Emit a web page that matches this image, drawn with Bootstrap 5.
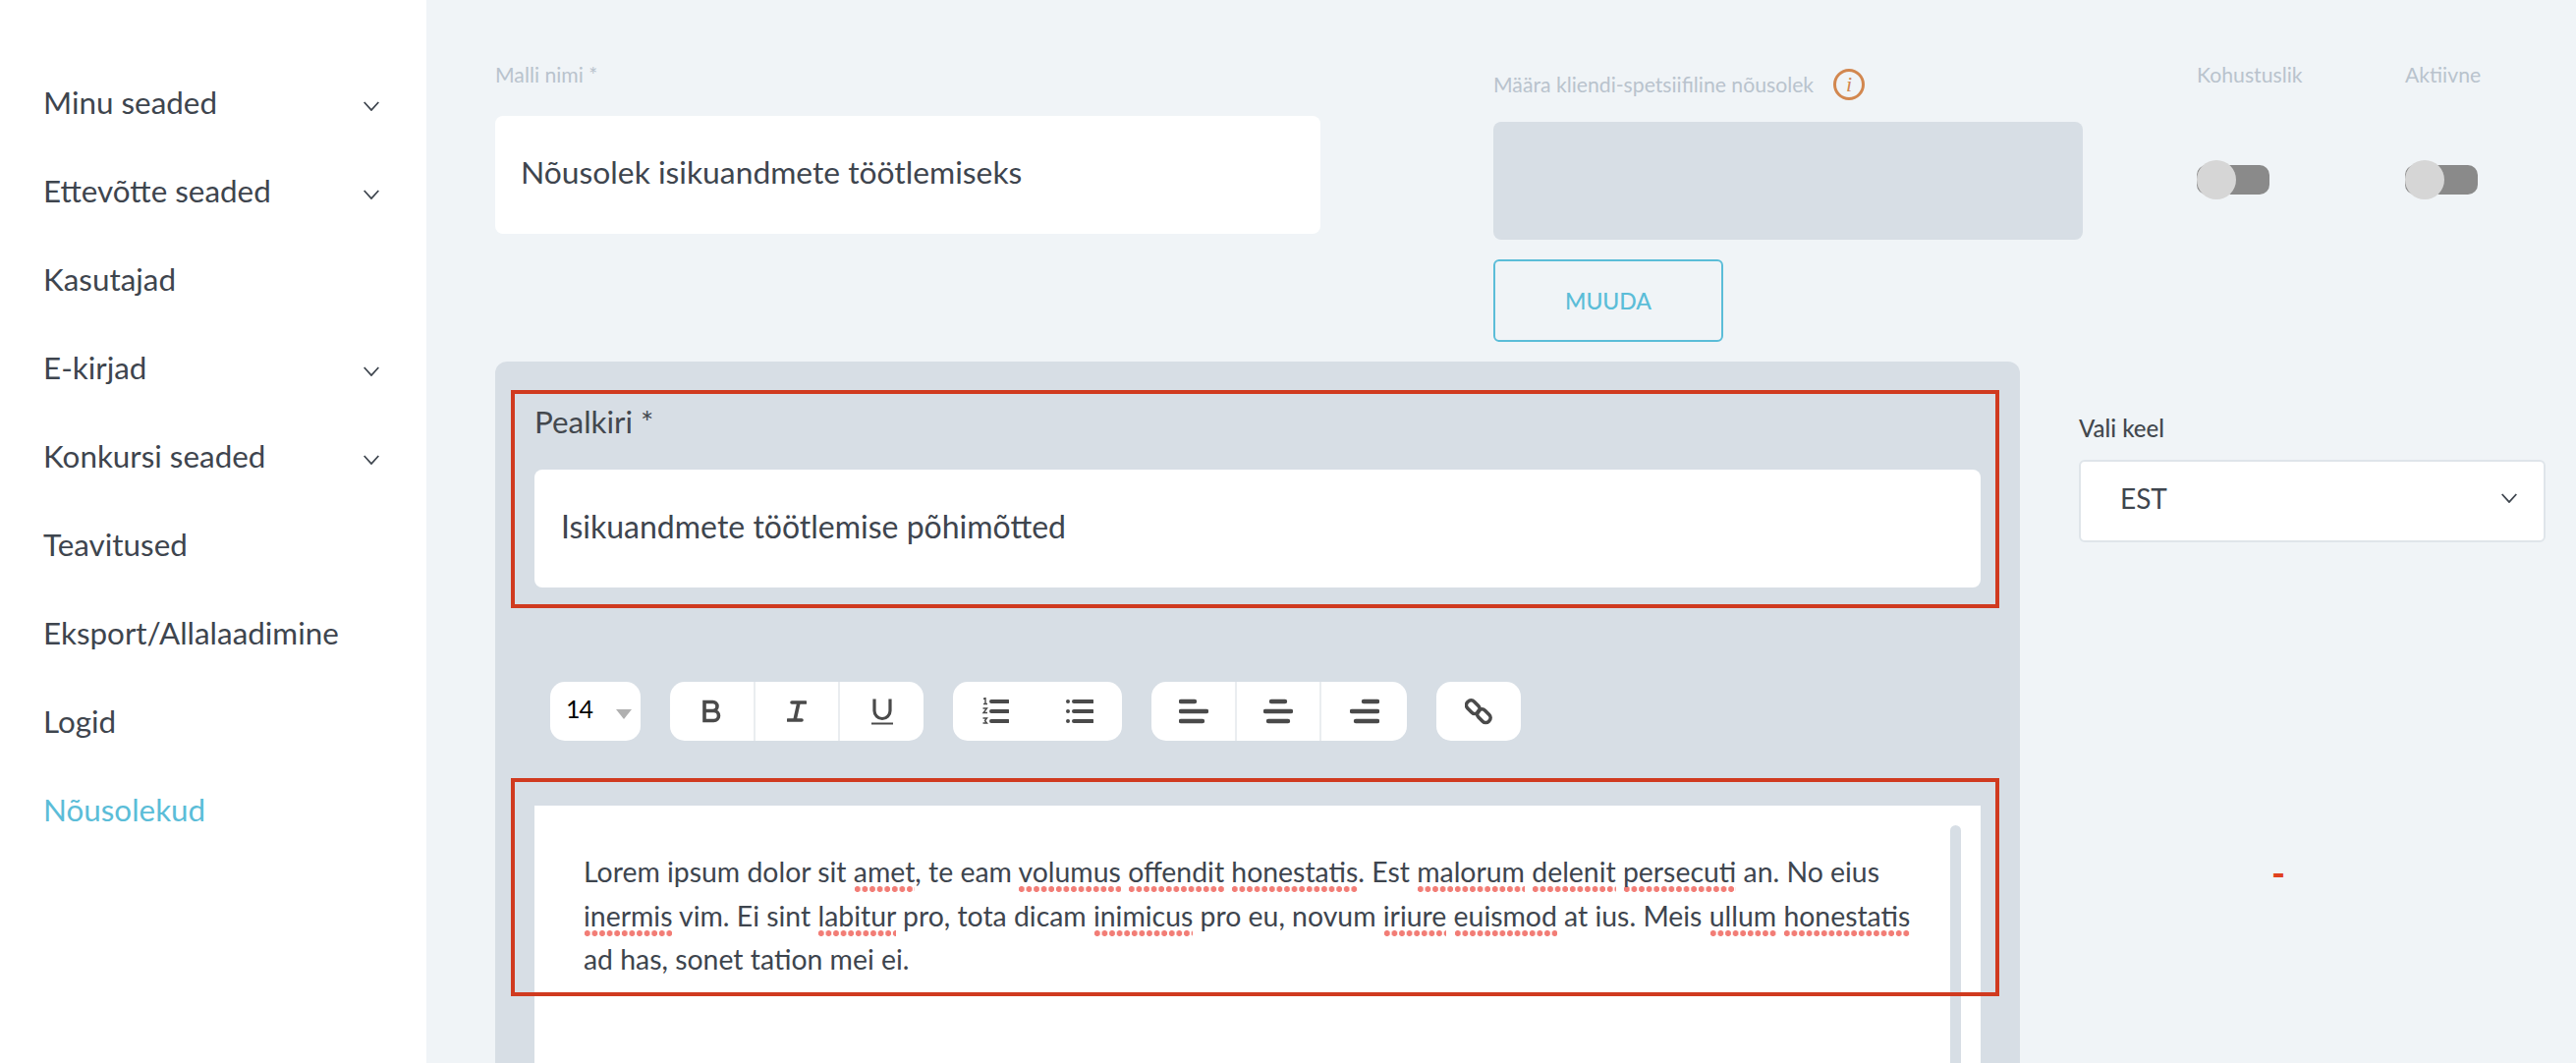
<!DOCTYPE html>
<html lang="et">
<head>
  <meta charset="UTF-8" />
  <meta name="viewport" content="width=device-width, initial-scale=1" />
  <title>Nõusolekud</title>
  <link href="https://cdn.jsdelivr.net/npm/bootstrap@5.3.0/dist/css/bootstrap.min.css" rel="stylesheet" />
  <style>
    html, body { height: 1082px; overflow: hidden; }
    body { background: #f0f4f7; color: #3e454e; font-family: Lato, "Noto Sans", sans-serif; }
    .side-menu { width: 434px; height: 1082px; background: #fff; padding: 60px 0 0 44px; flex-shrink: 0; }
    .side-menu a { display: flex; align-items: center; justify-content: space-between; height: 90px; width: 342px; color: #3e454e; font-size: 31.4px; text-decoration: none; }
    .side-menu a svg { margin-top: 5px; }
    .side-menu a.is-current { color: #5bbdd8; }
    .page-main { padding: 0 0 0 70px; flex-grow: 1; }
    .top-row { height: 368px; }
    .field-name { width: 840px; margin-right: 176px; padding-top: 63px; }
    .field-consent { width: 600px; padding-top: 70px; }
    .hint-label { font-size: 21.2px; color: #b9c3cd; line-height: 26px; margin: 0; }
    .text-box, .text-box:focus { height: 120px; border: 0; border-radius: 8px; background: #fff; color: #3e454e; font-size: 31.8px; padding: 0 26px 6px; box-shadow: none; }
    .field-name .text-box { margin-top: 29px; }
    .consent-box { height: 120px; background: #d7dee5; border-radius: 8px; margin-top: 22px; }
    .info-mark { width: 32px; height: 32px; border: 3px solid #d2874f; border-radius: 50%; color: #d2874f; font: italic 400 22px/26px "Liberation Serif", serif; text-align: center; margin-left: 20px; }
    .change-btn, .change-btn:hover { width: 234px; height: 84px; margin-top: 20px; border: 2px solid #5bbdd8; border-radius: 6px; color: #5bbdd8; font-size: 23px; font-weight: 500; background: transparent; display: flex; align-items: center; justify-content: center; }
    .switch-col { padding-top: 63px; margin-left: 116px; width: 212px; }
    .switch-col + .switch-col { margin-left: 0; }
    .toggle-track { position: relative; display: block; width: 74px; height: 30px; margin-top: 79px; background: #8a8a8a; border-radius: 10px; }
    .toggle-track::before { content: ""; position: absolute; left: 0; top: -5px; width: 40px; height: 40px; border-radius: 50%; background: #d6d6d6; }
    .editor-panel { width: 1552px; height: 714px; background: #d7dee5; border-radius: 12px 12px 0 0; padding: 29px 16px 0; position: relative; }
    .title-frame { width: 1515px; height: 222px; border: 4px solid #d03a1f; padding: 0 20px; }
    .title-frame label { display: block; font-size: 31.4px; line-height: 36px; margin-top: 10px; color: #43484e; }
    .title-frame .text-box { margin-top: 31px; width: 1472px; padding-left: 27px; padding-bottom: 5px; font-size: 32px; }
    .tool-row { margin: 75px 0 0 40px; gap: 30px; height: 60px; }
    .tool-group { height: 60px; background: #fff; border-radius: 15px; }
    .tool-group .btn { height: 60px; padding: 0; border: 0; border-radius: 0; display: flex; align-items: center; justify-content: center; color: #4a4a4a; }
    .tool-group .btn + .btn.split { border-left: 2px solid #eaedf0; }
    .tool-group .size-pick { width: 92px; font-size: 25px; line-height: 25px; color: #000; padding: 0 0 6px 16px; justify-content: flex-start; letter-spacing: -1px; }
    .size-pick i { display: block; margin: 12px 0 0 24px; width: 0; height: 0; border: 8px solid transparent; border-top: 10px solid #b0b0b0; border-bottom: 0; }
    .editor-body { height: 262px; background: #fff; margin: 66px 0 0 24px; width: 1472px; padding: 45px 40px 0 50px; font-size: 28.4px; line-height: 44.5px; }
    .editor-body p { margin: 0; white-space: nowrap; }
    .spell { background: radial-gradient(circle, #f27d76 2.7px, transparent 3.2px) 0 100% / 7.6px 6px repeat-x; padding-bottom: 4px; }
    .scroll-rail { position: absolute; left: 1481px; top: 472px; width: 11px; bottom: 0; background: #d7dee5; border-radius: 6px 6px 0 0; }
    .note-frame { position: absolute; left: 16px; top: 424px; width: 1515px; height: 222px; border: 4px solid #d03a1f; pointer-events: none; }
    .lang-col { width: 475px; margin-left: 60px; padding-top: 54px; }
    .lang-col label { display: block; font-size: 24px; font-weight: 500; line-height: 28px; color: #43484e; }
    .lang-select { height: 84px; margin-top: 18px; background: #fff; border: 2px solid #dfe5ea; border-radius: 6px; padding: 0 27px 6px 40px; font-size: 28px; }
    .red-dash { color: #e0401f; font-size: 38px; font-weight: 700; line-height: 30px; margin: 321px 0 0 196px; }
  </style>
</head>
<body class="d-flex">

<!-- Sidebar -->
<nav class="side-menu nav flex-column">
  <a href="#">Minu seaded <svg width="16" height="10" viewBox="0 0 16 10"><path d="M.7 1l7.300 8 7.300-8" fill="none" stroke="#3e454e" stroke-width="1.800"/></svg></a>
  <a href="#">Ettevõtte seaded <svg width="16" height="10" viewBox="0 0 16 10"><path d="M.7 1l7.300 8 7.300-8" fill="none" stroke="#3e454e" stroke-width="1.800"/></svg></a>
  <a href="#">Kasutajad</a>
  <a href="#">E-kirjad <svg width="16" height="10" viewBox="0 0 16 10"><path d="M.7 1l7.300 8 7.300-8" fill="none" stroke="#3e454e" stroke-width="1.800"/></svg></a>
  <a href="#">Konkursi seaded <svg width="16" height="10" viewBox="0 0 16 10"><path d="M.7 1l7.300 8 7.300-8" fill="none" stroke="#3e454e" stroke-width="1.800"/></svg></a>
  <a href="#">Teavitused</a>
  <a href="#">Eksport/Allalaadimine</a>
  <a href="#">Logid</a>
  <a href="#" class="is-current">Nõusolekud</a>
</nav>

<main class="page-main">
  <!-- Top fields -->
  <div class="top-row d-flex">
    <div class="field-name">
      <p class="hint-label">Malli nimi *</p>
      <input class="form-control text-box" type="text" value="Nõusolek isikuandmete töötlemiseks" aria-label="Malli nimi" />
    </div>
    <div class="field-consent">
      <div class="d-flex align-items-center">
        <p class="hint-label">Määra kliendi-spetsiifiline nõusolek</p>
        <span class="info-mark">i</span>
      </div>
      <div class="consent-box"></div>
      <button class="btn change-btn" type="button">MUUDA</button>
    </div>
    <div class="switch-col">
      <p class="hint-label">Kohustuslik</p>
      <span class="toggle-track"></span>
    </div>
    <div class="switch-col">
      <p class="hint-label">Aktiivne</p>
      <span class="toggle-track"></span>
    </div>
  </div>

  <div class="d-flex">
    <!-- Editor -->
    <section class="editor-panel">
      <div class="title-frame">
        <label for="title-input">Pealkiri *</label>
        <input id="title-input" class="form-control text-box" type="text" value="Isikuandmete töötlemise põhimõtted" />
      </div>

      <div class="tool-row d-flex">
        <div class="tool-group d-flex">
          <button class="btn size-pick" type="button">14<i></i></button>
        </div>
        <div class="tool-group d-flex">
          <button class="btn" style="width:85px" type="button"><svg width="22" height="24" viewBox="0 0 22 24"><path d="M3 2.500h8.500a4.500 4.500 0 0 1 0 9H3zM3 11.500h9.500a5 5 0 0 1 0 10H3z" fill="none" stroke="#4a4a4a" stroke-width="3.600"/></svg></button>
          <button class="btn split" style="width:86px" type="button"><svg width="20" height="24" viewBox="0 0 20 24"><path d="M5 3h14M1 21h14M12 3L8 21" fill="none" stroke="#4a4a4a" stroke-width="3.600" stroke-linecap="round"/></svg></button>
          <button class="btn split" style="width:87px" type="button"><svg width="24" height="28" viewBox="0 0 24 28"><path d="M4 1.500v12a8 8 0 0 0 16 0v-12" fill="none" stroke="#4a4a4a" stroke-width="3.200"/><path d="M1 26.500h22" stroke="#4a4a4a" stroke-width="2"/></svg></button>
        </div>
        <div class="tool-group d-flex">
          <button class="btn" style="width:86px" type="button"><svg width="28" height="28" viewBox="0 0 28 28"><path d="M10 4h17M10 14h17M10 24h17" stroke="#4a4a4a" stroke-width="4" stroke-linecap="round"/><path d="M2 1.500l2-1v6M2 6.500h4M1.500 11h4l-3.500 4.500h4M1.500 21h4l-2 2.500 2 2.500h-4" fill="none" stroke="#4a4a4a" stroke-width="1.400"/></svg></button>
          <button class="btn" style="width:86px" type="button"><svg width="28" height="28" viewBox="0 0 28 28"><path d="M8 4h19M8 14h19M8 24h19" stroke="#4a4a4a" stroke-width="4" stroke-linecap="round"/><circle cx="2" cy="4" r="2" fill="#4a4a4a"/><circle cx="2" cy="14" r="2" fill="#4a4a4a"/><circle cx="2" cy="24" r="2" fill="#4a4a4a"/></svg></button>
        </div>
        <div class="tool-group d-flex">
          <button class="btn" style="width:85px" type="button"><svg width="30" height="26" viewBox="0 0 30 26"><path d="M2 3h14M2 13h26M2 23h22" stroke="#4a4a4a" stroke-width="4.400" stroke-linecap="round"/></svg></button>
          <button class="btn split" style="width:86px" type="button"><svg width="30" height="26" viewBox="0 0 30 26"><path d="M8 3h14M2 13h26M5 23h20" stroke="#4a4a4a" stroke-width="4.400" stroke-linecap="round"/></svg></button>
          <button class="btn split" style="width:89px" type="button"><svg width="30" height="26" viewBox="0 0 30 26"><path d="M14 3h14M2 13h26M6 23h22" stroke="#4a4a4a" stroke-width="4.400" stroke-linecap="round"/></svg></button>
        </div>
        <div class="tool-group d-flex">
          <button class="btn" style="width:86px" type="button"><svg width="28" height="28" viewBox="0 0 28 28"><g fill="none" stroke="#4a4a4a" stroke-width="3.600"><rect x="1" y="5" width="15" height="9.500" rx="4.500" transform="rotate(45 8.500 9.500)"/><rect x="12" y="14" width="15" height="9.500" rx="4.500" transform="rotate(45 19.500 18.500)"/></g></svg></button>
        </div>
      </div>

      <div class="editor-body">
        <p>Lorem ipsum dolor sit <span class="spell">amet</span>, te eam <span class="spell">volumus</span> <span class="spell">offendit</span> <span class="spell">honestatis</span>. Est <span class="spell">malorum</span> <span class="spell">delenit</span> <span class="spell">persecuti</span> an. No eius</p>
        <p><span class="spell">inermis</span> vim. Ei sint <span class="spell">labitur</span> pro, tota dicam <span class="spell">inimicus</span> pro eu, novum <span class="spell">iriure</span> <span class="spell">euismod</span> at ius. Meis <span class="spell">ullum</span> <span class="spell">honestatis</span></p>
        <p>ad has, sonet tation mei ei.</p>
      </div>
      <div class="scroll-rail"></div>
      <div class="note-frame"></div>
    </section>

    <!-- Language -->
    <aside class="lang-col">
      <label>Vali keel</label>
      <div class="lang-select d-flex align-items-center justify-content-between">EST
        <svg width="16" height="10" viewBox="0 0 16 10"><path d="M.7 1l7.300 8 7.300-8" fill="none" stroke="#3e454e" stroke-width="1.800"/></svg>
      </div>
      <div class="red-dash">-</div>
    </aside>
  </div>
</main>

<script src="https://cdn.jsdelivr.net/npm/bootstrap@5.3.0/dist/js/bootstrap.bundle.min.js"></script>
</body>
</html>
